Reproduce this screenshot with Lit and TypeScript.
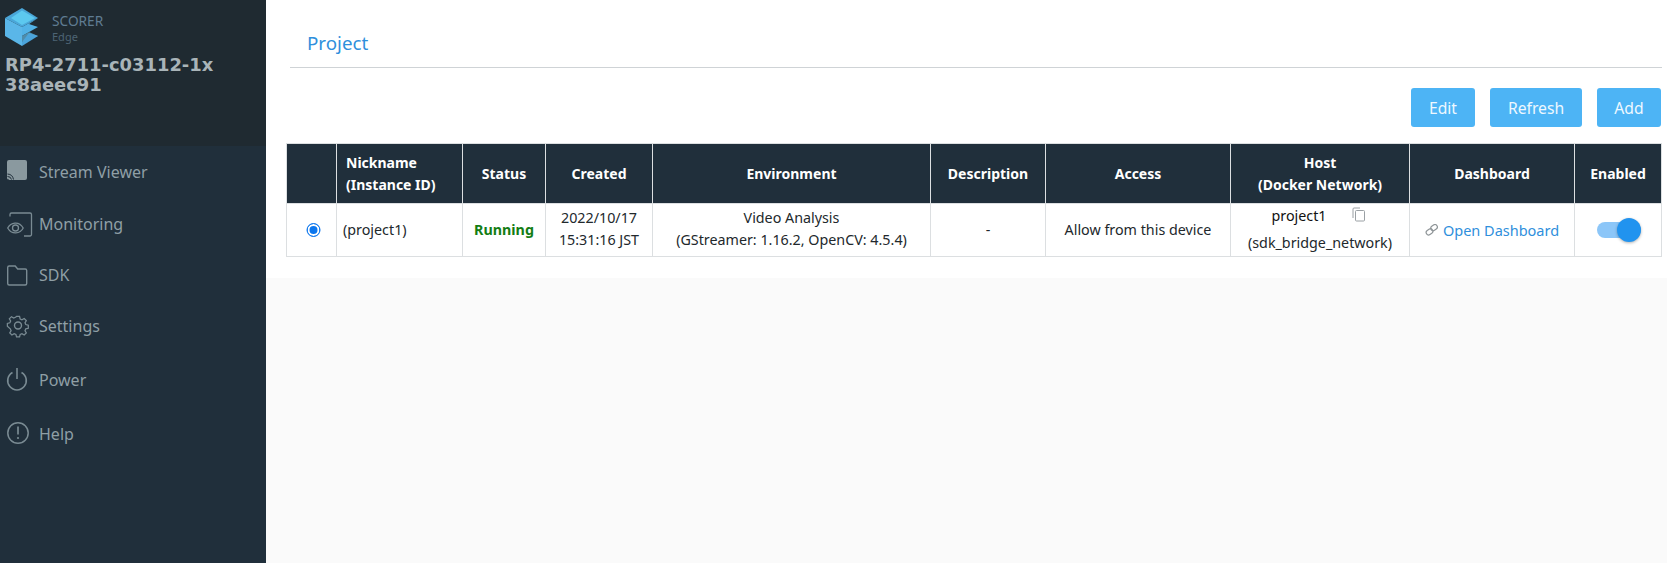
import { LitElement, html, css, svg } from "lit";
import { customElement } from "lit/decorators.js";

const icons = [
  svg`<rect x="7" y="1" width="20" height="20" rx="2" fill="#8a999f"/><path d="M7.500 20.500a1 1 0 0 1 1 0M7.500 17.500a4 4 0 0 1 4 3M7.500 15a6.500 6.500 0 0 1 6 5.500" fill="none" stroke="#202f3b" stroke-width="1"/>`,
  svg`<path d="M10 5.500V3.500a1.500 1.500 0 0 1 1.500-1.500H30a1.500 1.500 0 0 1 1.500 1.500v20a1.500 1.500 0 0 1-1.500 1.500H24" fill="none" stroke="#7a8b93" stroke-width="1.300"/><path d="M7.700 17c3-5.300 11-7.600 15.500 0-3 6-11.500 7-15.500 0z" fill="#202f3b" stroke="#7a8b93" stroke-width="1.300"/><circle cx="15.500" cy="17" r="3" fill="none" stroke="#7a8b93" stroke-width="1.300"/>`,
  svg`<path d="M7.700 5.500a1.500 1.500 0 0 1 1.500-1.500h6l2.500 3h7.500a1.500 1.500 0 0 1 1.500 1.500v13a1.500 1.500 0 0 1-1.500 1.500H9.200a1.500 1.500 0 0 1-1.500-1.500z" fill="none" stroke="#7a8b93" stroke-width="1.400"/>`,
  svg`<g transform="translate(7.500 2)" fill="none" stroke="#7a8b93" stroke-width="1.400"><circle cx="10.500" cy="10.500" r="3.500"/><path d="M8.800 1h3.400l.7 2.800 2 .9 2.500-1.500 2.400 2.400-1.500 2.500.9 2 2.800.7v3.400l-2.800.7-.9 2 1.500 2.500-2.400 2.400-2.500-1.500-2 .9-.7 2.800H8.800l-.7-2.800-2-.9-2.500 1.500-2.400-2.400 1.500-2.500-.9-2L-1.500 12V8.800l2.800-.7.9-2-1.500-2.500 2.400-2.400 2.500 1.500 2-.9z" transform="translate(1.200 .6) scale(.89)"/></g>`,
  svg`<path d="M12.500 5.500a9.300 9.300 0 1 0 9 0" fill="none" stroke="#7a8b93" stroke-width="1.600"/><path d="M17 1v11" fill="none" stroke="#7a8b93" stroke-width="1.600"/>`,
  svg`<circle cx="18" cy="12" r="10.200" fill="none" stroke="#7a8b93" stroke-width="1.500"/><path d="M18 5.500v8" stroke="#7a8b93" stroke-width="1.700"/><circle cx="18" cy="17" r="1.100" fill="#7a8b93"/>`,
];
const nav = ["Stream Viewer", "Monitoring", "SDK", "Settings", "Power", "Help"];

@customElement("app-root")
export class AppRoot extends LitElement {
  static styles = css`
    :host { display: flex; width: 1667px; height: 563px; overflow: hidden; font-family: "Noto Sans", sans-serif; background: #fafafa; }
    .side { width: 266px; flex: none; background: #202f3b; display: flex; flex-direction: column; }
    .brand { height: 146px; box-sizing: border-box; background: #1f2a31; padding: 8px 0 0 5px; }
    .logo { display: flex; gap: 14px; height: 38px; }
    .logo svg { flex: none; }
    .names { display: flex; flex-direction: column; padding-top: 4px; }
    .scorer { font-size: 13.700px; line-height: 18px; color: #5f7c92; }
    .edge { font-size: 11px; line-height: 14px; color: #4d6474; }
    .device { font: bold 17.900px/20px "DejaVu Sans", sans-serif; color: #a9b4b8; margin-top: 9px; }
    nav { display: flex; flex-direction: column; }
    .item { display: flex; align-items: center; height: 52px; color: #8f9fa6; font-size: 16px; }
    .item svg { flex: none; }
    .item:nth-child(3) { height: 49px; }
    .item:nth-child(4) { height: 53px; }
    .item:nth-child(5) { height: 55px; }
    .item:nth-child(6) { height: 53px; }
    .main { flex: 1; display: flex; flex-direction: column; }
    .panel { background: #fff; height: 278px; box-sizing: border-box; padding: 0 6px 0 20px; }
    .head { margin-left: 4px; height: 68px; box-sizing: border-box; border-bottom: 1px solid #cfd3d6; padding: 29px 0 0 17px; font-size: 18.800px; line-height: 28px; color: #2f8fdc; }
    .actions { display: flex; justify-content: flex-end; gap: 15px; margin-top: 20px; height: 39px; transform: translateX(-1px); }
    button { border: 0; border-radius: 3px; background: #4db4f5; color: #eef8ff; font: 400 15.700px "Noto Sans", sans-serif; padding: 0; height: 39px; }
    .w64 { width: 64px; }
    .w92 { width: 92px; }
    table { border-collapse: collapse; table-layout: fixed; width: 1375px; margin-top: 16px; font-size: 14.300px; color: #22282c; }
    th, td { border: 1px solid #dcdfe1; text-align: center; padding: 0; overflow: hidden; white-space: nowrap; }
    th { background: #202f3b; color: #fff; font-weight: 700; font-size: 14px; height: 58px; padding-top: 1px; line-height: 22px; }
    td { height: 50px; line-height: 22px; }
    .dates { padding-bottom: 2px; }
    .left { text-align: left; }
    th.left { padding-left: 9px; }
    td.left { padding-left: 6px; }
    .run { color: #147d14; font-weight: 700; }
    .radio { display: block; width: 14px; height: 14px; margin: 0 auto; box-sizing: border-box; border-radius: 50%; border: 1.500px solid #0b76ee; background: #0b76ee; box-shadow: inset 0 0 0 2px #fff; transform: translateX(1.500px); }
    .host { line-height: 27px; vertical-align: top; }
    .copyrow { display: flex; justify-content: center; align-items: center; gap: 25px; padding-right: 3px; margin-top: -2px; color: #111; }
    .copyrow svg { margin-bottom: 2px; }
    .net { display: block; height: 25px; }
    .link { color: #2f8fdc; display: inline-flex; align-items: center; gap: 5px; font-size: 14.500px; }
    .toggle { position: relative; display: block; width: 44px; height: 16px; margin: 0 auto; border-radius: 8px; background: #8cc6f8; transform: translateX(1px); }
    .knob { position: absolute; right: 0; top: -4px; width: 24px; height: 24px; border-radius: 50%; background: #2193ef; box-shadow: 0 1px 3px rgba(0,0,0,.3); }
  `;

  render() {
    return html`
      <aside class="side">
        <div class="brand">
          <div class="logo">
            <svg width="33" height="38" viewBox="0 0 33 38">
              <path d="M17 0L33 10 17 19 0 10z" fill="#4aa6d8"/>
              <path d="M17 2.500L30 10 17 17 6 10z" fill="#5cc8ef"/>
              <path d="M0 10L17 19V38L0 28z" fill="#5ab6e8"/>
              <path d="M17 19L33 10 24 16 33 19 17 28z" fill="#52b2e6"/>
              <path d="M17 28L33 19 24 24 33 28 17 34z" fill="#4f8caa"/>
              <path d="M17 34L24 25 33 28 17 38z" fill="#4ba4da"/>
            </svg>
            <div class="names"><span class="scorer">SCORER</span><span class="edge">Edge</span></div>
          </div>
          <div class="device">RP4-2711-c03112-1x<br />38aeec91</div>
        </div>
        <nav>
          ${nav.map((n, i) => html`<div class="item"><svg width="39" height="26" viewBox="0 0 39 26">${icons[i]}</svg><span>${n}</span></div>`)}
        </nav>
      </aside>
      <main class="main">
        <section class="panel">
          <div class="head">Project</div>
          <div class="actions">
            <button class="w64">Edit</button><button class="w92">Refresh</button><button class="w64">Add</button>
          </div>
          <table>
            <colgroup>
              ${[50, 126, 83, 107, 278, 115, 185, 179, 165, 87].map((w) => html`<col style="width:${w}px" />`)}
            </colgroup>
            <thead>
              <tr>
                <th></th>
                <th class="left">Nickname<br />(Instance ID)</th>
                <th>Status</th>
                <th>Created</th>
                <th>Environment</th>
                <th>Description</th>
                <th>Access</th>
                <th>Host<br />(Docker Network)</th>
                <th>Dashboard</th>
                <th>Enabled</th>
              </tr>
            </thead>
            <tbody>
              <tr>
                <td><span class="radio"></span></td>
                <td class="left">(project1)</td>
                <td class="run">Running</td>
                <td class="dates">2022/10/17<br />15:31:16 JST</td>
                <td class="dates">Video Analysis<br />(GStreamer: 1.16.2, OpenCV: 4.5.4)</td>
                <td>-</td>
                <td>Allow from this device</td>
                <td class="host">
                  <div class="copyrow">
                    <span>project1</span>
                    <svg width="14" height="15" viewBox="0 0 14 15" fill="none" stroke="#9aa0a4" stroke-width="1"><rect x="3.500" y="3.500" width="9" height="10.500" rx="1"/><path d="M1 11V2a1 1 0 0 1 1-1h6"/></svg>
                  </div>
                  <span class="net">(sdk_bridge_network)</span>
                </td>
                <td>
                  <span class="link">
                    <svg width="13" height="12" viewBox="0 0 13 12" fill="none" stroke="#8f9598" stroke-width="1.200"><rect x="5.500" y="1.200" width="7" height="4.800" rx="2.400" transform="rotate(-35 9 3.600)"/><rect x="1" y="5.500" width="7" height="4.800" rx="2.400" transform="rotate(-35 4.500 7.900)"/></svg>
                    Open Dashboard
                  </span>
                </td>
                <td><span class="toggle"><span class="knob"></span></span></td>
              </tr>
            </tbody>
          </table>
        </section>
      </main>
    `;
  }
}
